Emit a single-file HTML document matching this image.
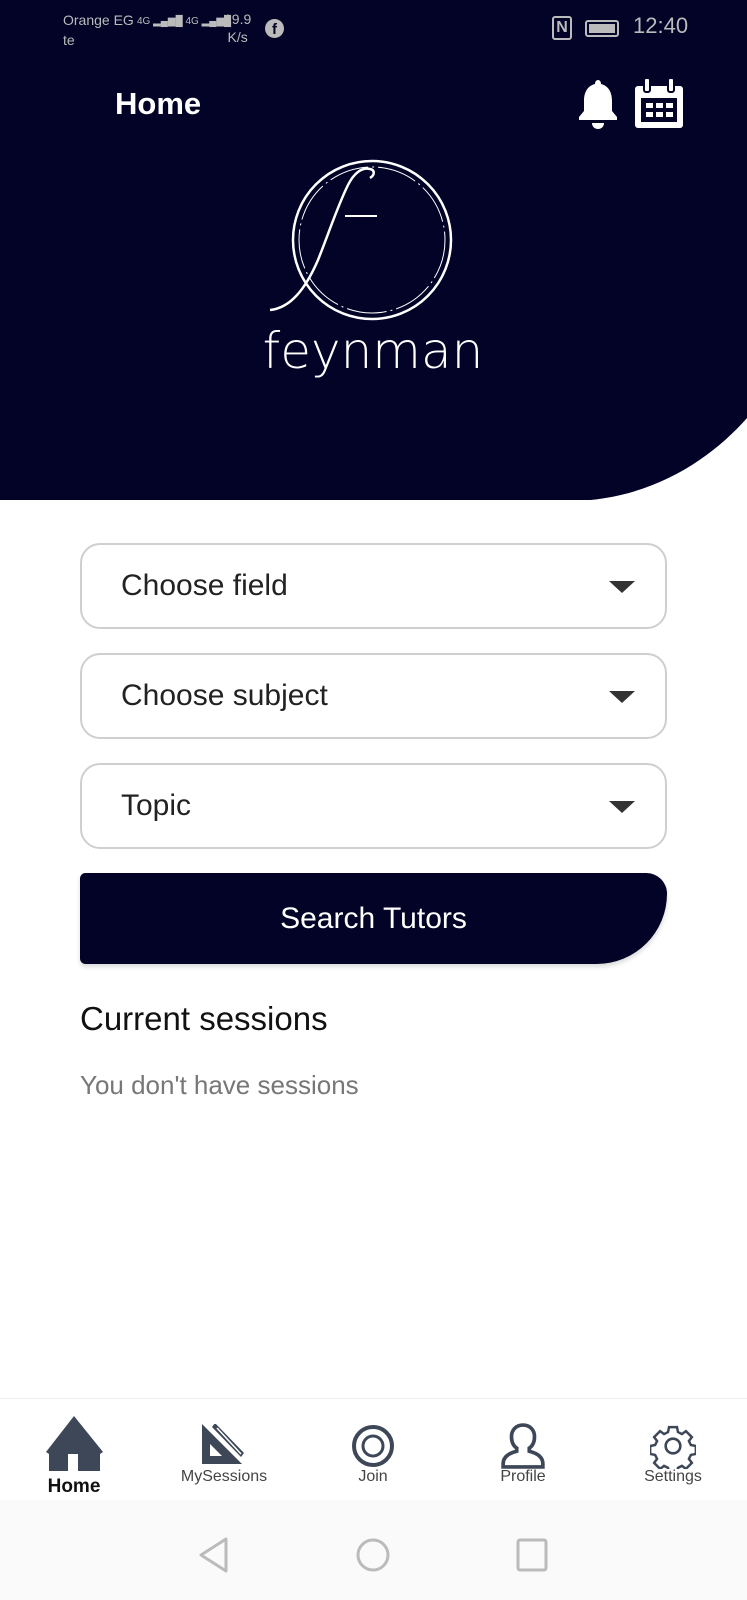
<!DOCTYPE html>
<html><head><meta charset="utf-8"><style>
*{margin:0;padding:0;box-sizing:border-box}
body{width:747px;height:1600px;position:relative;background:#fff;font-family:"Liberation Sans",sans-serif;overflow:hidden}
.hdr{position:absolute;left:0;top:0;width:747px;height:500px;background:#020326}
.abs{position:absolute}
.dd{position:absolute;left:80px;width:587px;height:86px;border:2px solid #cfcfcf;border-radius:20px;background:#fff}
.dd span{position:absolute;left:39px;top:50%;transform:translateY(-50%);font-size:30px;color:#222}
.dd i{position:absolute;right:30px;top:36px;width:0;height:0;border-left:13px solid transparent;border-right:13px solid transparent;border-top:12px solid #333}
.btn{position:absolute;left:80px;top:873px;width:587px;height:91px;background:#020326;border-radius:6px 22px 75px 6px;color:#fff;font-size:30px;text-align:center;line-height:91px;box-shadow:0 3px 5px rgba(0,0,0,.15)}
.lbl{position:absolute;top:1468px;font-size:16px;color:#444;transform:translateX(-50%);white-space:nowrap}
</style></head><body>
<div class="hdr"></div>
<svg class="abs" style="left:0;top:0" width="747" height="501"><path d="M571 501 C650 500 710 460 747 418 L747 501 Z" fill="#fff"/></svg>
<div class="abs" style="left:63px;top:10px;font-size:14px;color:#bbb;line-height:20px">Orange EG<br>te</div>
<div class="abs" style="left:137px;top:16px;font-size:10px;color:#bbb">4G ▂▄▆█ 4G ▂▄▆█</div>
<div class="abs" style="left:224px;top:10px;font-size:14px;color:#bbb;line-height:18px;text-align:center">19.9<br>K/s</div>
<div class="abs" style="left:265px;top:19px;width:19px;height:19px;border-radius:50%;background:#bbb;color:#020326;font-size:15px;font-weight:bold;text-align:center;line-height:21px">f</div>
<div class="abs" style="left:552px;top:16px;width:20px;height:24px;border:2px solid #bbb;border-radius:3px;color:#bbb;font-size:16px;font-weight:bold;text-align:center;line-height:20px">N</div>
<div class="abs" style="left:585px;top:20px;width:34px;height:17px;border:2px solid #bbb;border-radius:3px;padding:2px"><div style="background:#bbb;width:100%;height:100%"></div></div>
<div class="abs" style="left:633px;top:13px;font-size:22px;color:#bbb">12:40</div>
<div class="abs" style="left:115px;top:86px;font-size:31px;font-weight:bold;color:#fff">Home</div>
<svg class="abs" style="left:575px;top:78px" width="46" height="52" viewBox="0 0 46 52"><path d="M23 2c2 0 3 2 3 4 8 2 11 9 11 17v10l5 6v3H4v-3l5-6V23c0-8 3-15 11-17 0-2 1-4 3-4z" fill="#fff"/><path d="M17 45h12c0 4-3 6-6 6s-6-2-6-6z" fill="#fff"/></svg>
<svg class="abs" style="left:633px;top:78px" width="52" height="52" viewBox="0 0 52 52"><rect x="2" y="8" width="48" height="42" rx="3" fill="#fff"/><rect x="8" y="20" width="36" height="24" fill="#020326"/><rect x="11" y="0" width="6" height="14" rx="2" fill="#fff" stroke="#020326" stroke-width="2"/><rect x="35" y="0" width="6" height="14" rx="2" fill="#fff" stroke="#020326" stroke-width="2"/><g fill="#fff"><rect x="13" y="25" width="7" height="5"/><rect x="23" y="25" width="7" height="5"/><rect x="33" y="25" width="7" height="5"/><rect x="13" y="34" width="7" height="5"/><rect x="23" y="34" width="7" height="5"/><rect x="33" y="34" width="7" height="5"/></g></svg>
<svg class="abs" style="left:260px;top:150px" width="230" height="200" viewBox="0 0 230 200"><circle cx="112" cy="90" r="79" fill="none" stroke="#fff" stroke-width="2.5"/><circle cx="112" cy="90" r="73" fill="none" stroke="#fff" stroke-width="1" stroke-dasharray="40 4 2 4"/><path d="M10 160c20-2 35-20 48-50 10-25 20-55 30-75 6-12 14-18 22-16 5 1 5 6 0 9" fill="none" stroke="#fff" stroke-width="2.5"/><path d="M85 66h32" stroke="#fff" stroke-width="2"/></svg>
<div class="abs" style="left:373px;top:322px;transform:translateX(-50%);font-size:50px;color:#fff;font-family:'DejaVu Sans','Liberation Sans',sans-serif;font-weight:200;white-space:nowrap">feynman</div>
<div class="dd" style="top:543px"><span>Choose field</span><i></i></div>
<div class="dd" style="top:653px"><span>Choose subject</span><i></i></div>
<div class="dd" style="top:763px"><span>Topic</span><i></i></div>
<div class="btn">Search Tutors</div>
<div class="abs" style="left:80px;top:1000px;font-size:33px;color:#111">Current sessions</div>
<div class="abs" style="left:80px;top:1070px;font-size:26px;color:#777">You don't have sessions</div>
<div class="abs" style="left:0;top:1398px;width:747px;height:1px;background:#eee"></div>
<div class="abs" style="left:0;top:1500px;width:747px;height:100px;background:#fafafa"></div>
<svg class="abs" style="left:45px;top:1416px" width="59" height="56" viewBox="0 0 59 56"><path d="M4 34L29 3l26 31v21H4z" fill="#3d4758"/><path d="M29 0L58 36l-3 2H4l-3-2z" fill="#3d4758"/><rect x="23" y="38" width="10" height="17" fill="#fff"/></svg>
<div class="lbl" style="left:74px;top:1476px;font-weight:bold;color:#111;font-size:19px">Home</div>
<svg class="abs" style="left:202px;top:1424px" width="44" height="40" viewBox="0 0 44 40"><path d="M0 0L40 40H0z" fill="#3d4758"/><path d="M8 20L20 32H8z" fill="#fff"/><path d="M12 0l28 30-2 3L10 3z" fill="#fff"/><path d="M13 -1l29 30-3 4-29-30z" fill="#3d4758"/><path d="M15 4l24 26" stroke="#fff" stroke-width="1.5"/></svg>
<div class="lbl" style="left:224px">MySessions</div>
<svg class="abs" style="left:351px;top:1424px" width="44" height="44"><circle cx="22" cy="22" r="19" fill="none" stroke="#3d4758" stroke-width="4"/><circle cx="22" cy="22" r="10" fill="none" stroke="#3d4758" stroke-width="3"/></svg>
<div class="lbl" style="left:373px">Join</div>
<svg class="abs" style="left:500px;top:1423px" width="46" height="46" viewBox="0 0 44 44"><path d="M22 2c7 0 11 5 11 11 0 5-2 9-5 11v3c8 2 13 6 13 12v3H3v-3c0-6 5-10 13-12v-3c-3-2-5-6-5-11 0-6 4-11 11-11z" fill="none" stroke="#3d4758" stroke-width="3.5"/></svg>
<div class="lbl" style="left:523px">Profile</div>
<svg class="abs" style="left:650px;top:1423px" width="46" height="46" viewBox="0 0 44 44"><g transform="translate(22 22)" fill="none" stroke="#3d4758" stroke-width="2.5"><path d="M-4 -19h8l1 5 4 2 4-3 6 6-3 4 2 4 5 1v8l-5 1-2 4 3 4-6 6-4-3-4 2-1 5h-8l-1-5-4-2-4 3-6-6 3-4-2-4-5-1v-8l5-1 2-4-3-4 6-6 4 3 4-2z" transform="scale(.95)"/><circle r="7"/></g></svg>
<div class="lbl" style="left:673px">Settings</div>
<svg class="abs" style="left:195px;top:1535px" width="40" height="40"><path d="M31 4L6 20l25 16z" fill="none" stroke="#bbb" stroke-width="3" stroke-linejoin="round"/></svg>
<svg class="abs" style="left:353px;top:1535px" width="40" height="40"><circle cx="20" cy="20" r="15" fill="none" stroke="#bbb" stroke-width="3"/></svg>
<svg class="abs" style="left:512px;top:1535px" width="40" height="40"><rect x="6" y="5" width="28" height="30" rx="2" fill="none" stroke="#bbb" stroke-width="3"/></svg>
</body></html>
